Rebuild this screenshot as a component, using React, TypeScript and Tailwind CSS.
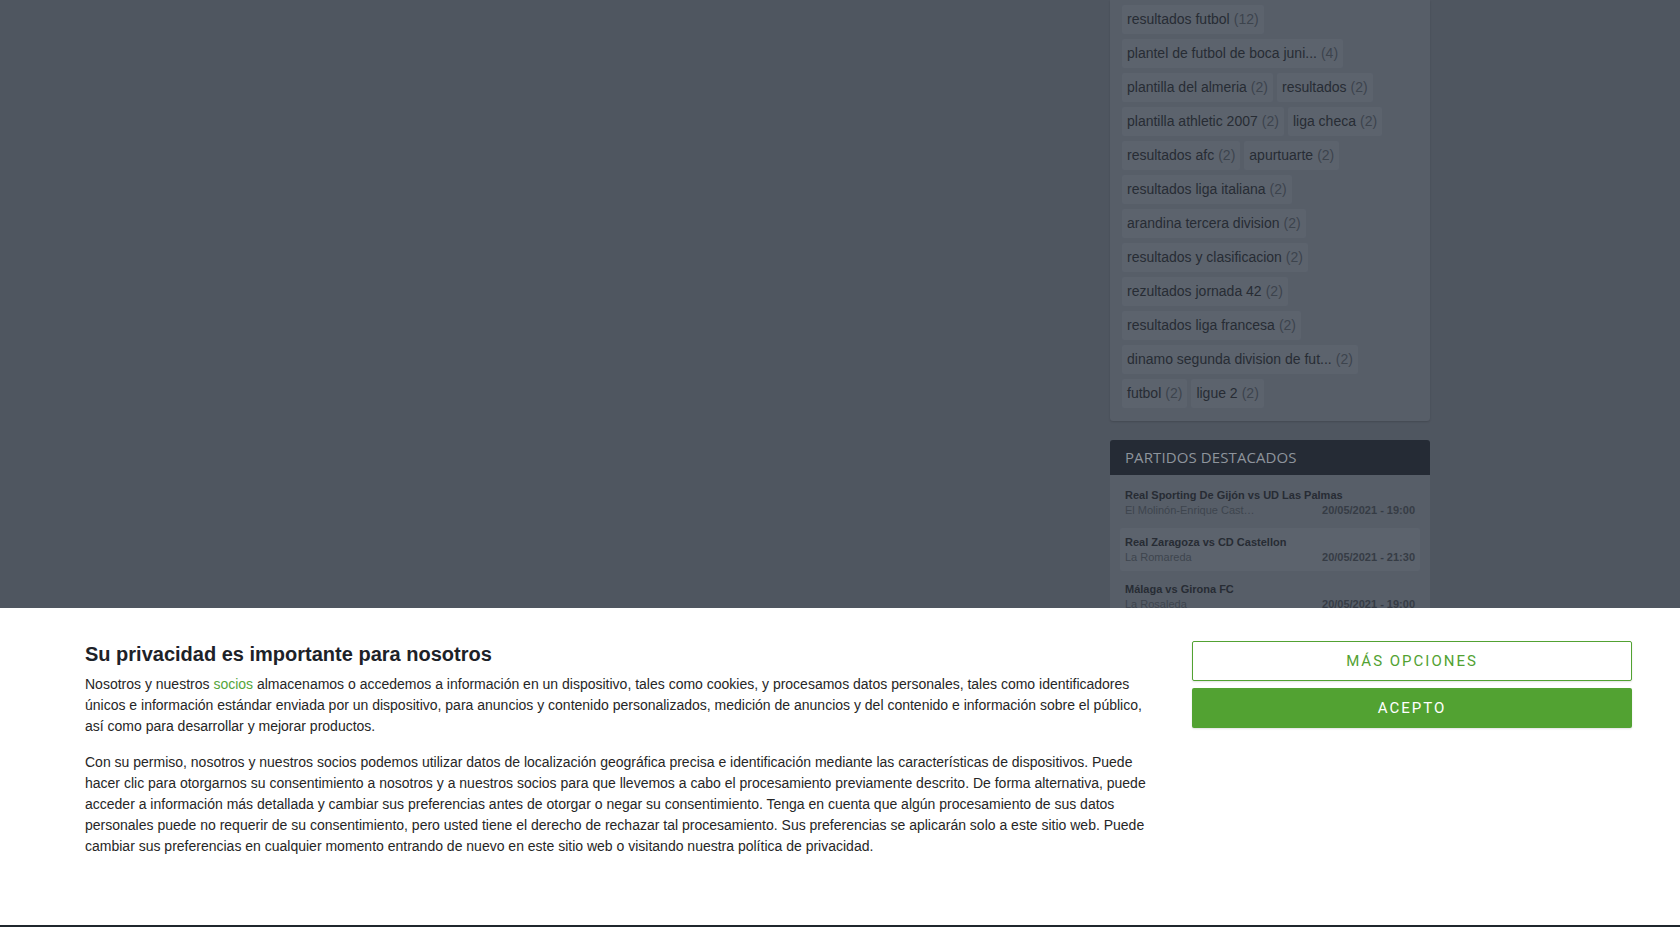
const tagRows: [string, string][][] = [
  [["resultados futbol", "12"]],
  [["plantel de futbol de boca juni...", "4"]],
  [["plantilla del almeria", "2"], ["resultados", "2"]],
  [["plantilla athletic 2007", "2"], ["liga checa", "2"]],
  [["resultados afc", "2"], ["apurtuarte", "2"]],
  [["resultados liga italiana", "2"]],
  [["arandina tercera division", "2"]],
  [["resultados y clasificacion", "2"]],
  [["rezultados jornada 42", "2"]],
  [["resultados liga francesa", "2"]],
  [["dinamo segunda division de fut...", "2"]],
  [["futbol", "2"], ["ligue 2", "2"]],
];

const matches = [
  { title: "Real Sporting De Gijón vs UD Las Palmas", venue: "El Molinón-Enrique Cast…", date: "20/05/2021 - 19:00" },
  { title: "Real Zaragoza vs CD Castellon", venue: "La Romareda", date: "20/05/2021 - 21:30" },
  { title: "Málaga vs Girona FC", venue: "La Rosaleda", date: "20/05/2021 - 19:00" },
];

function TagCloud() {
  return (
    <div className="bg-[#575e68] rounded-b-[3px] shadow-[0_1px_2px_rgba(0,0,0,0.15)] px-[12px] pt-[5px] pb-[13px] flex flex-col gap-[5px]">
      {tagRows.map((row, i) => (
        <div key={i} className="flex gap-[4px]">
          {row.map(([label, count]) => (
            <span
              key={label}
              className="h-[29px] px-[5px] flex items-center bg-[#5c636d] rounded-[2px] text-[14px] text-[#272c34] whitespace-nowrap"
            >
              {label}
              <span className="ml-[4px] text-[#3d444d]">({count})</span>
            </span>
          ))}
        </div>
      ))}
    </div>
  );
}

function FeaturedMatches() {
  return (
    <div className="mt-[19px]">
      <div className="h-[35px] bg-[#252b35] rounded-t-[3px] px-[15px] flex items-center">
        <span className="font-['Open_Sans',sans-serif] text-[15px] text-[#8e949c] tracking-[0.1px]">
          PARTIDOS DESTACADOS
        </span>
      </div>
      <div className="bg-[#575e68] px-[10px] pt-[6px] flex flex-col gap-[4px] pb-[10px]">
        {matches.map((m, i) => (
          <div
            key={i}
            className={`px-[5px] pt-[7px] pb-[6px] rounded-[2px] ${i === 1 ? "bg-[#5c636d]" : ""}`}
          >
            <div className="text-[11px] leading-[15px] font-bold text-[#272c34]">{m.title}</div>
            <div className="flex justify-between text-[11px] leading-[15px]">
              <span className="text-[#3e454e]">{m.venue}</span>
              <span className="font-bold text-[#363c45]">{m.date}</span>
            </div>
          </div>
        ))}
      </div>
    </div>
  );
}

function ConsentBanner() {
  return (
    <div className="h-[317px] bg-white flex pl-[85px] pr-[48px] pt-[32px]">
      <div className="w-[1085px] pt-[2px] text-[#262626]">
        <h2 className="text-[20px] leading-[24px] font-bold text-[#1d2228]">
          Su privacidad es importante para nosotros
        </h2>
        <p className="mt-[8px] text-[14px] leading-[21px]">
          Nosotros y nuestros <span className="text-[#55a53a]">socios</span> almacenamos o accedemos a información en un dispositivo, tales como cookies, y procesamos datos personales, tales como identificadores
          <br />
          únicos e información estándar enviada por un dispositivo, para anuncios y contenido personalizados, medición de anuncios y del contenido e información sobre el público,
          <br />
          así como para desarrollar y mejorar productos.
        </p>
        <p className="mt-[15px] text-[14px] leading-[21px]">
          Con su permiso, nosotros y nuestros socios podemos utilizar datos de localización geográfica precisa e identificación mediante las características de dispositivos. Puede
          <br />
          hacer clic para otorgarnos su consentimiento a nosotros y a nuestros socios para que llevemos a cabo el procesamiento previamente descrito. De forma alternativa, puede
          <br />
          acceder a información más detallada y cambiar sus preferencias antes de otorgar o negar su consentimiento. Tenga en cuenta que algún procesamiento de sus datos
          <br />
          personales puede no requerir de su consentimiento, pero usted tiene el derecho de rechazar tal procesamiento. Sus preferencias se aplicarán solo a este sitio web. Puede
          <br />
          cambiar sus preferencias en cualquier momento entrando de nuevo en este sitio web o visitando nuestra política de privacidad.
        </p>
      </div>
      <div className="ml-[22px] w-[440px] flex flex-col gap-[7px] pt-[1px] font-['Roboto',sans-serif]">
        <button className="h-[40px] w-full border border-[#52a232] rounded-[2px] bg-white text-[#52a232] text-[15px] tracking-[2px] shadow-[0_1px_2px_rgba(0,0,0,0.12)]">
          MÁS OPCIONES
        </button>
        <button className="h-[40px] w-full rounded-[2px] bg-[#52a232] text-white text-[15px] tracking-[2px] shadow-[0_1px_2px_rgba(0,0,0,0.12)]">
          ACEPTO
        </button>
      </div>
    </div>
  );
}

export default function App() {
  return (
    <div className="w-[1680px] h-[927px] overflow-hidden flex flex-col bg-[#4f5660] font-['Liberation_Sans',Arial,sans-serif]">
      <div className="h-[608px] overflow-hidden flex">
        <div className="w-[1110px] shrink-0" />
        <aside className="w-[320px] shrink-0">
          <TagCloud />
          <FeaturedMatches />
        </aside>
      </div>
      <ConsentBanner />
      <div className="h-[2px] bg-[#1f262d]" />
    </div>
  );
}
